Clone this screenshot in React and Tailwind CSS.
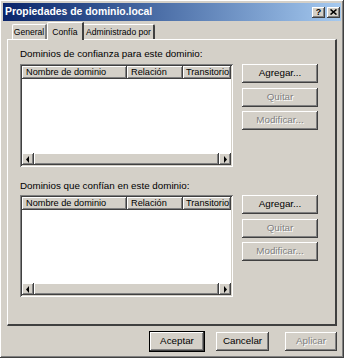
const raised =
  "shadow-[inset_-1px_-1px_#404040,inset_1px_1px_#ffffff,inset_-2px_-2px_#808080,inset_2px_2px_#d4d0c8]";
const sunken =
  "shadow-[inset_1px_1px_#808080,inset_-1px_-1px_#ffffff,inset_2px_2px_#404040,inset_-2px_-2px_#d4d0c8]";

function Btn({ label, disabled, isDefault, className = "" }) {
  return (
    <div
      className={`${className} h-[19px] flex items-center justify-center bg-[#d4d0c8] ${
        isDefault ? "outline outline-1 outline-black" : ""
      } ${raised}`}
    >
      <span
        className={
          disabled
            ? "text-[#808080] [text-shadow:1px_1px_0_#ffffff]"
            : "text-black"
        }
      >
        {label}
      </span>
    </div>
  );
}

function Arrow({ dir }) {
  return (
    <div className={`w-[12px] h-full bg-[#d4d0c8] flex items-center justify-center ${raised}`}>
      <svg width="4" height="7" viewBox="0 0 4 7">
        {dir === "left" ? (
          <path d="M3 0 L0 3.5 L3 7 Z" fill="#000" />
        ) : (
          <path d="M1 0 L4 3.5 L1 7 Z" fill="#000" />
        )}
      </svg>
    </div>
  );
}

function DomainList({ height }) {
  return (
    <div className={`w-[213px] bg-white p-[2px] flex flex-col ${sunken}`} style={{ height }}>
      <div className="flex h-[13px] shrink-0 whitespace-nowrap overflow-hidden text-[9.2px]">
        <div className={`w-[105px] pl-[4px] flex items-center bg-[#d4d0c8] ${raised}`}>Nombre de dominio</div>
        <div className={`w-[56px] pl-[4px] flex items-center bg-[#d4d0c8] ${raised}`}>Relación</div>
        <div className={`flex-1 pl-[3px] flex items-center bg-[#d4d0c8] overflow-hidden ${raised}`}>Transitorio</div>
      </div>
      <div className="flex-1" />
      <div className="flex h-[12px] shrink-0 bg-[#e6e3de]">
        <Arrow dir="left" />
        <div className={`flex-1 bg-[#d4d0c8] ${raised}`} />
        <Arrow dir="right" />
      </div>
    </div>
  );
}

function Section({ label, labelTop, rowTop, listHeight }) {
  return (
    <div>
      <div className="h-[11px] leading-[11px] whitespace-nowrap" style={{ marginTop: labelTop }}>
        {label}
      </div>
      <div className="flex" style={{ marginTop: rowTop }}>
        <DomainList height={listHeight} />
        <div className="ml-[9px] w-[76px] flex flex-col">
          <Btn label="Agregar..." className="w-full" />
          <Btn label="Quitar" disabled className="w-full mt-[5px]" />
          <Btn label="Modificar..." disabled className="w-full mt-[4px]" />
        </div>
      </div>
    </div>
  );
}

export default function App() {
  return (
    <div
      className={`w-[344px] h-[358px] bg-[#d4d0c8] p-[3px] text-[9.8px] text-black ${raised}`}
      style={{ fontFamily: '"Liberation Sans", Arial, sans-serif' }}
    >
      {/* title bar */}
      <div className="h-[18px] flex items-center justify-between pl-[2px] pr-[1px] bg-gradient-to-r from-[#0a246a] to-[#a6caf0]">
        <span className="text-white font-bold text-[10.4px]">Propiedades de dominio.local</span>
        <div className="flex gap-[2px]">
          <div className={`w-[13px] h-[11px] flex items-center justify-center bg-[#d4d0c8] font-bold text-[9px] leading-none ${raised}`}>?</div>
          <div className={`w-[13px] h-[11px] flex items-center justify-center bg-[#d4d0c8] ${raised}`}>
            <svg width="7" height="6" viewBox="0 0 7 6">
              <path d="M0.5 0.5 L6.5 5.5 M6.5 0.5 L0.5 5.5" stroke="#000" strokeWidth="1.6" />
            </svg>
          </div>
        </div>
      </div>

      {/* tabs */}
      <div className="px-[4px]">
        <div className="flex items-end h-[18px] pl-[5px] whitespace-nowrap text-[8.6px]">
          <div className="w-[35px] h-[15px] flex items-center justify-center border-l border-t border-white border-r-2 border-r-[#808080] rounded-tl-[2px]">
            General
          </div>
          <div className="relative z-10 -mb-[1px] w-[37px] h-[18px] flex items-start pt-[3px] justify-center bg-[#d4d0c8] border-l border-t border-white border-r-2 border-r-[#404040] rounded-tl-[2px]">
            Confía
          </div>
          <div className="w-[71px] h-[15px] flex items-center justify-center border-t border-white border-r-2 border-r-[#404040] rounded-tr-[2px]">
            Administrado por
          </div>
        </div>

        {/* panel */}
        <div className="h-[287px] border-l border-t border-white border-r-2 border-r-[#404040] border-b-2 border-b-[#404040] pl-[12px]">
          <Section
            label="Dominios de confianza para este dominio:"
            labelTop="8px"
            rowTop="5px"
            listHeight="103px"
          />
          <Section
            label="Dominios que confían en este dominio:"
            labelTop="13px"
            rowTop="4px"
            listHeight="102px"
          />
        </div>

        {/* bottom buttons */}
        <div className="flex justify-end mt-[6px]">
          <Btn label="Aceptar" isDefault className="w-[54px]" />
          <Btn label="Cancelar" className="w-[53px] ml-[12px]" />
          <Btn label="Aplicar" disabled className="w-[52px] ml-[16px]" />
        </div>
      </div>
    </div>
  );
}
